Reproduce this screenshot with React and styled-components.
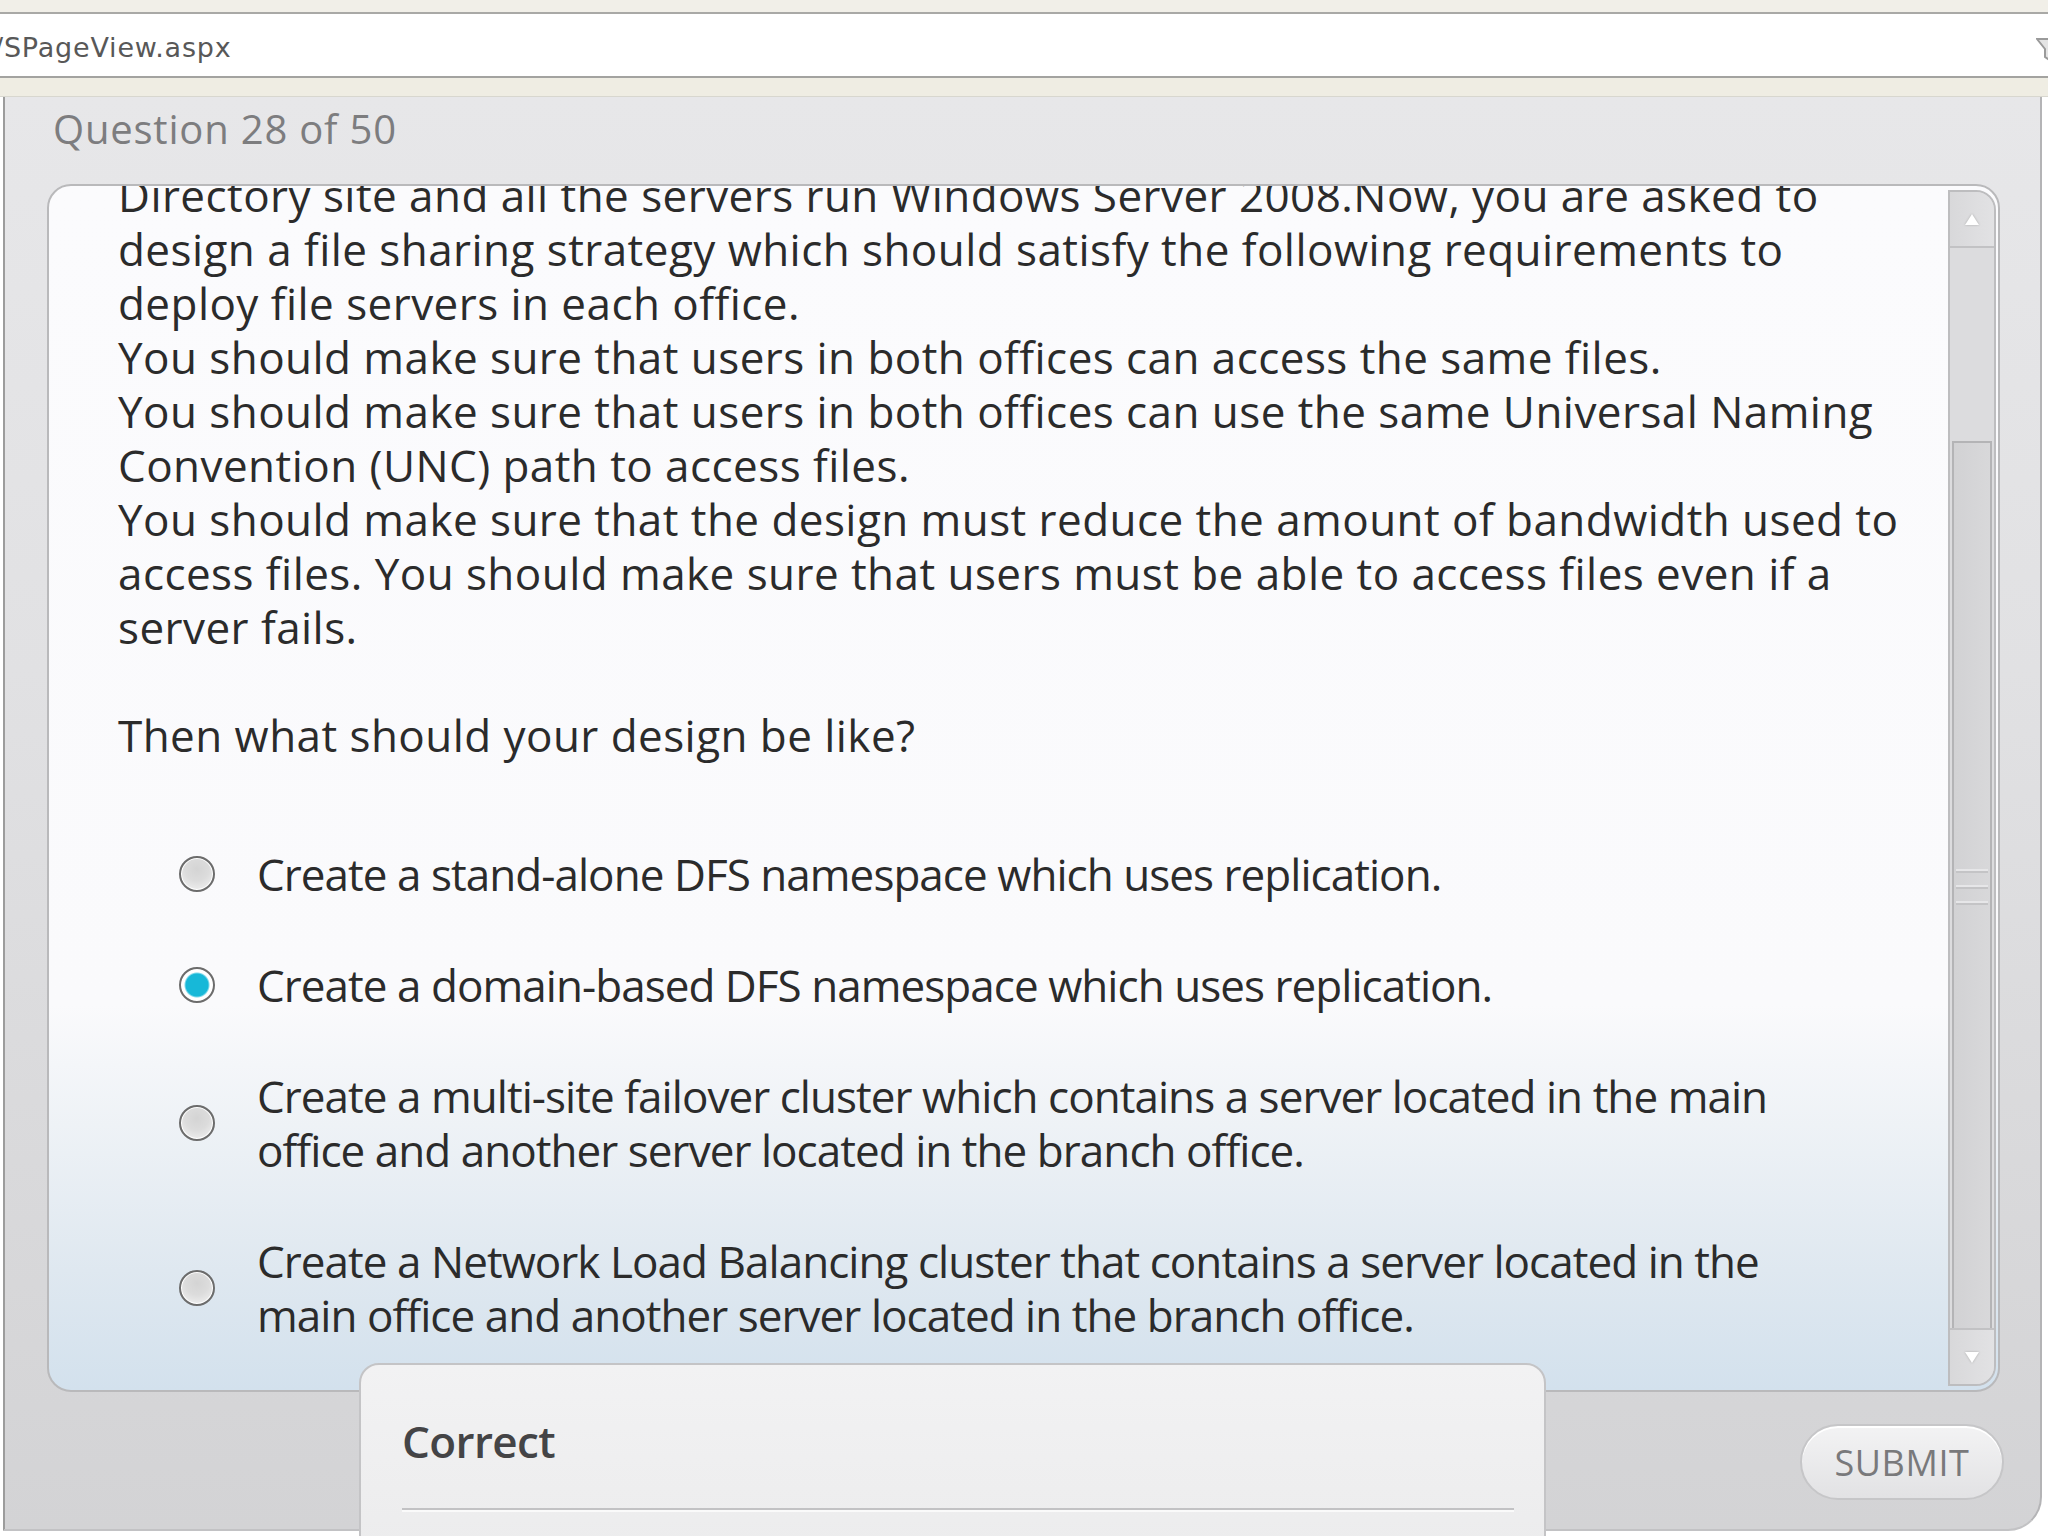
import React from 'react';
import styled, { createGlobalStyle } from 'styled-components';

const GlobalStyle = createGlobalStyle`
  html, body {
    margin: 0;
    padding: 0;
    background: #ffffff;
  }
  #root {
    width: 2048px;
    height: 1536px;
    overflow: hidden;
  }
`;

const questionLines = [
  'Directory site and all the servers run Windows Server 2008.Now, you are asked to',
  'design a file sharing strategy which should satisfy the following requirements to',
  'deploy file servers in each office.',
  'You should make sure that users in both offices can access the same files.',
  'You should make sure that users in both offices can use the same Universal Naming',
  'Convention (UNC) path to access files.',
  'You should make sure that the design must reduce the amount of bandwidth used to',
  'access files. You should make sure that users must be able to access files even if a',
  'server fails.',
];

const options = [
  { lines: ['Create a stand-alone DFS namespace which uses replication.'] },
  { lines: ['Create a domain-based DFS namespace which uses replication.'], checked: true },
  {
    lines: [
      'Create a multi-site failover cluster which contains a server located in the main',
      'office and another server located in the branch office.',
    ],
  },
  {
    lines: [
      'Create a Network Load Balancing cluster that contains a server located in the',
      'main office and another server located in the branch office.',
    ],
  },
];

const App = () => {
  return (
    <>
      <GlobalStyle />
      <Page>
        <TopStrip />
        <AddressBar>
          <Url>/SPageView.aspx</Url>
          <FilterIcon viewBox="0 0 24 30">
            <path d="M1 4 L23 4 L15 14 L15 26 L9 22 L9 14 Z" fill="#e4e4e4" stroke="#9a9a9a" strokeWidth="2" />
          </FilterIcon>
        </AddressBar>
        <BeigeStrip />
        <Panel>
          <Title>Question 28 of 50</Title>
          <QuestionBox>
            <Scroller>
              <Body>
                {questionLines.map((l, i) => (
                  <Line key={i}>{l}</Line>
                ))}
                <Ask>Then what should your design be like?</Ask>
                <Options>
                  {options.map((o, i) => (
                    <Option key={i}>
                      <Radio $checked={o.checked} />
                      <OptionText>
                        {o.lines.map((l, j) => (
                          <Line key={j}>{l}</Line>
                        ))}
                      </OptionText>
                    </Option>
                  ))}
                </Options>
              </Body>
            </Scroller>
            <ScrollBar>
              <ScrollButton $top>
                <Arrow $up />
              </ScrollButton>
              <Track>
                <Thumb>
                  <Grip />
                  <Grip />
                  <Grip />
                </Thumb>
              </Track>
              <ScrollButton>
                <Arrow />
              </ScrollButton>
            </ScrollBar>
          </QuestionBox>
          <Footer>
            <SubmitButton>SUBMIT</SubmitButton>
          </Footer>
          <Feedback>
            <FeedbackTitle>Correct</FeedbackTitle>
            <Rule />
          </Feedback>
        </Panel>
      </Page>
    </>
  );
};

export default App;

const Page = styled.div`
  width: 2048px;
  height: 1536px;
  display: flex;
  flex-direction: column;
  background: #ffffff;
  font-family: "Open Sans", "Noto Sans", sans-serif;
`;

const TopStrip = styled.div`
  height: 12px;
  background: #f1efe8;
  flex: none;
`;

const AddressBar = styled.div`
  height: 62px;
  flex: none;
  background: #ffffff;
  border-top: 2px solid #a9a9a6;
  border-bottom: 2px solid #a3a3a0;
  display: flex;
  justify-content: space-between;
  align-items: center;
  overflow: hidden;
`;

const Url = styled.span`
  margin-left: -6px;
  font-family: "DejaVu Sans", "Liberation Sans", sans-serif;
  font-size: 27px;
  letter-spacing: 0.8px;
  color: #585858;
  padding-top: 4px;
`;

const FilterIcon = styled.svg`
  width: 24px;
  height: 30px;
  margin-right: -12px;
  margin-top: 10px;
`;

const BeigeStrip = styled.div`
  height: 18px;
  flex: none;
  background: #efede3;
  border-bottom: 1px solid #d8d7cf;
`;

const Panel = styled.div`
  position: relative;
  height: 1434px;
  flex: none;
  width: 2039px;
  margin-left: 3px;
  box-sizing: border-box;
  border-left: 2px solid #9c9c9c;
  border-right: 2px solid #b4b4b6;
  border-bottom: 2px solid #c2c2c4;
  border-bottom-right-radius: 34px;
  background: linear-gradient(#e7e7e9 0%, #e1e1e3 40%, #d3d3d5 100%);
  padding: 0 40px 0 42px;
  display: flex;
  flex-direction: column;
`;

const Title = styled.div`
  padding-top: 5px;
  padding-left: 6px;
  font-size: 40px;
  line-height: 54px;
  color: #7d7d7f;
  letter-spacing: 0.8px;
`;

const QuestionBox = styled.div`
  margin-top: 28px;
  height: 1208px;
  box-sizing: border-box;
  border: 2px solid #b9b9bb;
  border-radius: 24px;
  background: linear-gradient(#fbfbfd 0%, #fafafc 68%, #eef2f6 78%, #dfe8f0 90%, #d3e1ed 100%);
  display: flex;
  overflow: hidden;
`;

const Scroller = styled.div`
  flex: 1;
  overflow: hidden;
`;

const Body = styled.div`
  margin-top: -18px;
  padding-left: 69px;
  font-size: 44px;
  line-height: 54px;
  color: #2b2b2b;
  letter-spacing: 0.45px;
`;

const Line = styled.div`
  white-space: nowrap;
`;

const Ask = styled.div`
  margin-top: 54px;
`;

const Options = styled.div`
  margin-top: 85px;
  padding-left: 61px;
  display: flex;
  flex-direction: column;
  gap: 57px;
  letter-spacing: -0.95px;
`;

const Option = styled.div`
  display: flex;
  align-items: center;
  gap: 42px;
`;

const OptionText = styled.div``;

const Radio = styled.span`
  flex: none;
  width: 36px;
  height: 36px;
  box-sizing: border-box;
  border-radius: 50%;
  border: 2px solid #6c6c6c;
  background: ${(p) =>
    p.$checked
      ? 'radial-gradient(circle, #17b8d8 0 11px, #7fd8ea 12px, #ffffff 13px 15px, #e0e0e0 16px)'
      : 'radial-gradient(circle at 50% 35%, #d4d4d4 0%, #dcdcdc 45%, #f6f6f6 100%)'};
  box-shadow: inset 0 0 0 1px #ffffff;
`;

const ScrollBar = styled.div`
  flex: none;
  width: 48px;
  margin: 4px 2px 4px 0;
  box-sizing: border-box;
  border: 2px solid #bdbdbf;
  border-radius: 0 20px 20px 0;
  background: #dadadc;
  display: flex;
  flex-direction: column;
  overflow: hidden;
`;

const ScrollButton = styled.div`
  height: 54px;
  flex: none;
  display: flex;
  align-items: center;
  justify-content: center;
  background: linear-gradient(90deg, #d8d8da, #e2e2e4);
  border-${(p) => (p.$top ? 'bottom' : 'top')}: 2px solid #c2c2c4;
`;

const Arrow = styled.span`
  width: 0;
  height: 0;
  border-left: 7px solid transparent;
  border-right: 7px solid transparent;
  ${(p) => (p.$up ? 'border-bottom: 11px solid #ffffff;' : 'border-top: 11px solid #ffffff;')}
  filter: drop-shadow(0 0 1px #a8a8a8);
`;

const Track = styled.div`
  flex: 1;
  display: flex;
  flex-direction: column;
  padding-top: 193px;
  background: #dcdcde;
`;

const Thumb = styled.div`
  flex: 1;
  margin: 0 2px;
  border: 2px solid #b4b4b6;
  border-bottom: none;
  background: linear-gradient(90deg, #d2d2d4, #d8d8da);
  display: flex;
  flex-direction: column;
  align-items: center;
  justify-content: center;
  gap: 14px;
`;

const Grip = styled.span`
  width: 32px;
  height: 2px;
  background: #e6e6e8;
  box-shadow: 0 2px 0 #c4c4c6;
`;

const Footer = styled.div`
  display: flex;
  justify-content: flex-end;
  padding-top: 32px;
`;

const SubmitButton = styled.button`
  width: 204px;
  height: 76px;
  margin-right: -4px;
  border-radius: 38px;
  border: 2px solid #c6c6c8;
  background: linear-gradient(#f3f3f4, #e2e2e4);
  box-shadow: inset 0 2px 0 #ffffff;
  font-family: "Open Sans", "Noto Sans", sans-serif;
  font-size: 36px;
  color: #79797b;
  letter-spacing: 0.6px;
  padding: 0;
`;

const Feedback = styled.div`
  position: absolute;
  left: 354px;
  top: 1266px;
  width: 1187px;
  height: 220px;
  box-sizing: border-box;
  border: 2px solid #c4c4c6;
  border-radius: 20px 20px 0 0;
  background: linear-gradient(#f2f2f3, #ebebec);
  padding: 49px 30px 0 41px;
`;

const FeedbackTitle = styled.div`
  font-size: 44px;
  font-weight: 600;
  line-height: 54px;
  color: #444446;
  letter-spacing: -0.6px;
`;

const Rule = styled.div`
  margin-top: 40px;
  height: 2px;
  background: #c2c2c4;
  box-shadow: 0 2px 0 #fafafa;
`;
